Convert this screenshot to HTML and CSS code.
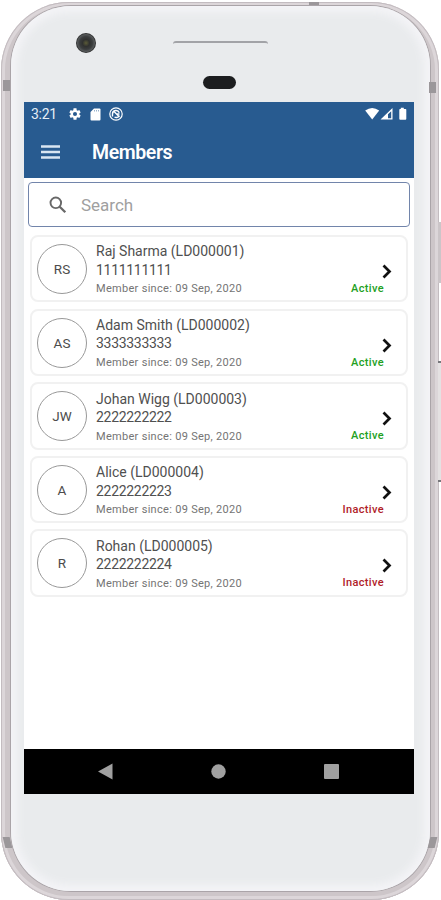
FILE: index.html
```html
<!doctype html>
<html lang="en">
<head>
    <meta charset="UTF-8">
    <title>Members</title>
    <link rel="stylesheet" href="styles.css">
</head>
<body>
<div class="phone">
    <!-- side buttons and antenna gaps -->
    <span class="key power"></span>
    <span class="key volume"></span>
    <span class="gap gap-top"></span>
    <span class="gap gap-tl"></span>
    <span class="gap gap-tr"></span>
    <span class="gap gap-bl"></span>
    <span class="gap gap-br"></span>
    <div class="face">
        <div class="forehead">
            <span class="camera"></span>
            <span class="speaker"></span>
            <span class="sensor"></span>
        </div>
        <div class="screen">
            <div class="top">
                <div class="status">
                    <span class="time">3:21</span>
                    <svg class="gear" width="14" height="14" viewBox="0 0 24 24"><path fill="#fff" fill-rule="evenodd" d="M19.4 13a7.500 7.500 0 0 0 0-2l2.300-1.700-2.300-4-2.700 1.200a8 8 0 0 0-1.800-1L14.500 2h-5l-.4 3.500a8 8 0 0 0-1.800 1L4.600 5.300l-2.300 4L4.600 11a7.500 7.500 0 0 0 0 2l-2.300 1.700 2.300 4 2.700-1.200a8 8 0 0 0 1.800 1l.4 3.500h5l.4-3.500a8 8 0 0 0 1.800-1l2.700 1.200 2.300-4zM12 15.500a3.500 3.500 0 1 1 0-7 3.500 3.500 0 0 1 0 7z"/></svg>
                    <svg class="sd" width="11" height="13" viewBox="0 0 11 13"><path fill="#fff" d="M4 .5h5.500q1 0 1 1v10q0 1-1 1h-8q-1 0-1-1V4z"/><path stroke="#7f9fc0" stroke-width=".8" d="M4.500 2v1.500M6.500 2v1.500M8.500 2v1.500"/></svg>
                    <svg class="sync" width="14" height="14" viewBox="0 0 14 14" fill="none" stroke="#fff"><circle cx="7" cy="7" r="6.200" stroke-width="1.200"/><path stroke-width="1.400" d="M3.500 9.500V7a3.500 3.500 0 0 1 6.800-1.200M4.500 4l6 6M10.300 8.500A3.300 3.300 0 0 1 5.500 10M7 7h3.500"/></svg>
                    <svg class="signals" width="43" height="14" viewBox="0 0 43 14"><path fill="#fff" d="M.2 3.500q7-5 14 0L7.200 12.500z"/><path fill="#fff" fill-rule="evenodd" d="M15.500 12.500 27.500 1v11.500zM23 7.200v4h3.200V4.200z"/><path fill="#fff" d="M34 2h1.800V.8h3V2h1.800q.7 0 .7.700v9.100q0 .9-.9.900h-5.200q-.9 0-.9-.9V2.700q0-.7.700-.7z"/></svg>
                </div>
                <div class="bar">
                    <svg class="menu" width="19" height="14" viewBox="0 0 19 14"><path stroke="#d9e6f2" stroke-width="2.300" d="M0 1.500h19M0 7h19M0 12.500h19"/></svg>
                    <h1>Members</h1>
                </div>
            </div>
            <div class="search">
                <svg width="18" height="18" viewBox="0 0 18 18" fill="none" stroke="#686868"><circle cx="6.800" cy="6.800" r="5.300" stroke-width="1.900"/><path stroke-width="2.300" d="M10.700 10.700l5.600 5.600"/></svg>
                <span>Search</span>
            </div>
            <ul class="list">
                <li>
                    <div class="avatar">RS</div>
                    <div class="info">
                        <p class="name">Raj Sharma (LD000001)</p>
                        <p class="tel">1111111111</p>
                        <p class="since">Member since: 09 Sep, 2020</p>
                    </div>
                    <div class="side">
                        <svg class="arrow" width="10" height="15" viewBox="0 0 10 15"><path fill="none" stroke="#111" stroke-width="2.700" d="M1.500 1.500l6 6-6 6"/></svg>
                        <span class="active">Active</span>
                    </div>
                </li>
                <li>
                    <div class="avatar">AS</div>
                    <div class="info">
                        <p class="name">Adam Smith (LD000002)</p>
                        <p class="tel">3333333333</p>
                        <p class="since">Member since: 09 Sep, 2020</p>
                    </div>
                    <div class="side">
                        <svg class="arrow" width="10" height="15" viewBox="0 0 10 15"><path fill="none" stroke="#111" stroke-width="2.700" d="M1.500 1.500l6 6-6 6"/></svg>
                        <span class="active">Active</span>
                    </div>
                </li>
                <li>
                    <div class="avatar">JW</div>
                    <div class="info">
                        <p class="name">Johan Wigg (LD000003)</p>
                        <p class="tel">2222222222</p>
                        <p class="since">Member since: 09 Sep, 2020</p>
                    </div>
                    <div class="side">
                        <svg class="arrow" width="10" height="15" viewBox="0 0 10 15"><path fill="none" stroke="#111" stroke-width="2.700" d="M1.500 1.500l6 6-6 6"/></svg>
                        <span class="active">Active</span>
                    </div>
                </li>
                <li>
                    <div class="avatar">A</div>
                    <div class="info">
                        <p class="name">Alice (LD000004)</p>
                        <p class="tel">2222222223</p>
                        <p class="since">Member since: 09 Sep, 2020</p>
                    </div>
                    <div class="side">
                        <svg class="arrow" width="10" height="15" viewBox="0 0 10 15"><path fill="none" stroke="#111" stroke-width="2.700" d="M1.500 1.500l6 6-6 6"/></svg>
                        <span class="inactive">Inactive</span>
                    </div>
                </li>
                <li>
                    <div class="avatar">R</div>
                    <div class="info">
                        <p class="name">Rohan (LD000005)</p>
                        <p class="tel">2222222224</p>
                        <p class="since">Member since: 09 Sep, 2020</p>
                    </div>
                    <div class="side">
                        <svg class="arrow" width="10" height="15" viewBox="0 0 10 15"><path fill="none" stroke="#111" stroke-width="2.700" d="M1.500 1.500l6 6-6 6"/></svg>
                        <span class="inactive">Inactive</span>
                    </div>
                </li>
            </ul>
            <div class="navbar">
                <svg width="15" height="17" viewBox="0 0 15 17"><path fill="#a0a0a0" d="M0 8.500 14.500.5v16z"/></svg>
                <svg width="15" height="15" viewBox="0 0 15 15"><circle cx="7.500" cy="7.500" r="7.200" fill="#a0a0a0"/></svg>
                <svg width="15" height="15" viewBox="0 0 15 15"><rect width="15" height="15" rx="1" fill="#a0a0a0"/></svg>
            </div>
        </div>
    </div>
</div>
</body>
</html>
```
FILE: styles.css
```css
*{
    margin: 0;
    padding: 0;
    list-style: none;
    box-sizing: border-box;
}
body{
    width: 441px;
    height: 900px;
    overflow: hidden;
    background: #fff;
    font-family: Roboto, "Liberation Sans", sans-serif;
}
svg{
    display: block;
    flex: none;
}
.phone{
    position: relative;
    width: 438px;
    height: 898px;
    margin: 2px 0 0 1px;
    padding: 4px 9px 9px 10px;
    border-radius: 68px;
    background: #cdc6c9;
    box-shadow: inset 0 0 0 1px #c3bcc0, inset 0 0 0 4px #dcd6d9, inset 0 -3px 1px #98898f;
}
.face{
    height: 885px;
    border-radius: 60px;
    background: #e9ebed;
    box-shadow: 0 0 0 1px #aaa4a8, inset 0 0 8px 6px #f4f4f7;
    padding-left: 13px;
}

/* phone hardware */
.key{
    position: absolute;
    left: 437px;
    width: 5px;
}
.power{
    top: 220px;
    height: 61px;
    background: #cbc5c8;
}
.volume{
    top: 359px;
    height: 121px;
    background: #e4e1e2;
    border-top: 2px solid #77777b;
    border-bottom: 2px solid #77777b;
}
.gap{
    position: absolute;
    background: #9b979a;
}
.gap-top{
    left: 308px;
    top: 0;
    width: 10px;
    height: 3px;
}
.gap-tl, .gap-tr, .gap-bl, .gap-br{
    width: 7px;
    height: 11px;
}
.gap-tl{
    left: 2px;
    top: 78px;
}
.gap-tr{
    right: 3px;
    top: 80px;
}
.gap-bl{
    left: 3px;
    top: 835px;
    transform: skewX(14deg);
}
.gap-br{
    right: 3px;
    top: 835px;
    transform: skewX(-14deg);
}
.forehead{
    position: relative;
    height: 96px;
}
.camera{
    position: absolute;
    left: 52px;
    top: 27px;
    width: 20px;
    height: 20px;
    border-radius: 50%;
    background: radial-gradient(circle, #5b5b38 0, #303130 25%, #3b3d3e 45%, #555859 60%, #222 70%);
}
.speaker{
    position: absolute;
    left: 149px;
    top: 35px;
    width: 95px;
    height: 5px;
    border-top: 2px solid #a2a3a7;
    border-radius: 3px 3px 0 0;
}
.sensor{
    position: absolute;
    left: 179px;
    top: 70px;
    width: 33px;
    height: 13px;
    border-radius: 7px;
    background: #1c1d1f;
}

.screen{
    display: flex;
    flex-direction: column;
    width: 390px;
    height: 692px;
    background: #fff;
}
.top{
    height: 76px;
    background: #285b90;
}
.status{
    display: flex;
    align-items: center;
    height: 24px;
    padding: 0 6px 0 7px;
    color: #e6eef6;
}
.time{
    width: 37px;
    font-size: 14px;
    letter-spacing: -.3px;
}
.sd{
    margin-left: 8px;
}
.sync{
    margin-left: 8px;
}
.signals{
    margin-left: auto;
}
.bar{
    display: flex;
    align-items: center;
    height: 52px;
    padding-left: 17px;
}
.bar h1{
    margin-left: 32px;
    font-size: 19.500px;
    font-weight: 600;
    letter-spacing: -.4px;
    color: #fff;
}
.search{
    display: flex;
    align-items: center;
    gap: 14px;
    height: 45px;
    margin: 4px 4px 0;
    padding-left: 20px;
    border: 1px solid #7285ab;
    border-radius: 4px;
    font-size: 17px;
    color: #a0a0a0;
}
.list{
    padding: 8px 6px 0;
}
.list li{
    display: flex;
    height: 67.400px;
    margin-bottom: 6.200px;
    border: 2px solid #f1f1f1;
    border-radius: 8px;
}
.avatar{
    width: 50px;
    height: 50px;
    margin: 7px 9px 0 5px;
    border: 1px solid #999;
    border-radius: 50%;
    line-height: 49px;
    text-align: center;
    font-size: 13.500px;
    color: #4c4c4c;
}
.info{
    padding-top: 5.400px;
    white-space: nowrap;
    color: #505050;
}
.name, .tel{
    height: 18.500px;
    line-height: 19px;
    font-size: 14px;
}
.tel{
    letter-spacing: -.3px;
}
.since{
    height: 18px;
    line-height: 19px;
    font-size: 11px;
    letter-spacing: .3px;
    color: #747474;
}
.side{
    display: flex;
    flex-direction: column;
    align-items: flex-end;
    margin-left: auto;
    padding: 27px 14px 0 0;
}
.side span{
    margin: 3px 8px 0 0;
    line-height: 14px;
    font-size: 11px;
    font-weight: 500;
    letter-spacing: .35px;
}
.active{
    color: #22a022;
}
.inactive{
    color: #b01c28;
}
.navbar{
    display: flex;
    align-items: center;
    justify-content: space-between;
    height: 45px;
    margin-top: auto;
    padding: 0 75px 0 74px;
    background: #000;
}
```
